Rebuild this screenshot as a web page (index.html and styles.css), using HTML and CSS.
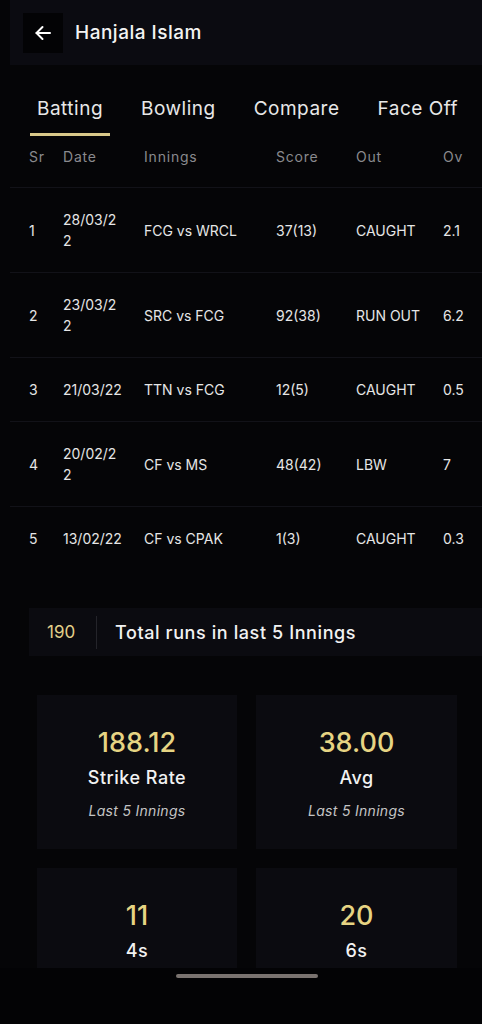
FILE: index.html
```html
<!DOCTYPE html>
<html lang="en">
<head>
<meta charset="utf-8">
<title>Hanjala Islam</title>
<link rel="stylesheet" href="styles.css">
</head>
<body>
<div class="screen">
  <header class="header">
    <button class="back" aria-label="Back">
      <svg width="18" height="18" viewBox="0 0 18 18" fill="none" stroke="#ffffff" stroke-width="2" stroke-linecap="round" stroke-linejoin="round"><path d="M16 9H2.5"/><path d="M8.5 3L2.5 9l6 6"/></svg>
    </button>
    <h1 class="title">Hanjala Islam</h1>
  </header>

  <nav class="tabs">
    <div class="tab active">Batting</div>
    <div class="tab">Bowling</div>
    <div class="tab">Compare</div>
    <div class="tab">Face Off</div>
  </nav>

  <div class="table">
    <div class="row head">
      <div class="c sr">Sr</div><div class="c date">Date</div><div class="c inn">Innings</div><div class="c score">Score</div><div class="c out">Out</div><div class="c ov">Ov</div>
    </div>
    <div class="row">
      <div class="c sr">1</div><div class="c date">28/03/2<br>2</div><div class="c inn">FCG vs WRCL</div><div class="c score">37(13)</div><div class="c out">CAUGHT</div><div class="c ov">2.1</div>
    </div>
    <div class="row">
      <div class="c sr">2</div><div class="c date">23/03/2<br>2</div><div class="c inn">SRC vs FCG</div><div class="c score">92(38)</div><div class="c out">RUN OUT</div><div class="c ov">6.2</div>
    </div>
    <div class="row">
      <div class="c sr">3</div><div class="c date">21/03/22</div><div class="c inn">TTN vs FCG</div><div class="c score">12(5)</div><div class="c out">CAUGHT</div><div class="c ov">0.5</div>
    </div>
    <div class="row">
      <div class="c sr">4</div><div class="c date">20/02/2<br>2</div><div class="c inn">CF vs MS</div><div class="c score">48(42)</div><div class="c out">LBW</div><div class="c ov">7</div>
    </div>
    <div class="row last">
      <div class="c sr">5</div><div class="c date">13/02/22</div><div class="c inn">CF vs CPAK</div><div class="c score">1(3)</div><div class="c out">CAUGHT</div><div class="c ov">0.3</div>
    </div>
  </div>

  <div class="total">
    <span class="total-num">190</span>
    <span class="total-div"></span>
    <span class="total-label">Total runs in last 5 Innings</span>
  </div>

  <div class="cards">
    <div class="card">
      <div class="val">188.12</div>
      <div class="lbl">Strike Rate</div>
      <div class="sub">Last 5 Innings</div>
    </div>
    <div class="card">
      <div class="val">38.00</div>
      <div class="lbl">Avg</div>
      <div class="sub">Last 5 Innings</div>
    </div>
    <div class="card">
      <div class="val">11</div>
      <div class="lbl">4s</div>
      <div class="sub">Last 5 Innings</div>
    </div>
    <div class="card">
      <div class="val">20</div>
      <div class="lbl">6s</div>
      <div class="sub">Last 5 Innings</div>
    </div>
  </div>

  <div class="navbar"><span class="home-ind"></span></div>
</div>
</body>
</html>
```

FILE: styles.css
```css
* { box-sizing: border-box; }
html, body { margin: 0; padding: 0; }
body {
  background: #050507;
  color: #ececec;
  font-family: Inter, "Noto Sans", "Liberation Sans", sans-serif;
}
.screen {
  position: relative;
  width: 482px;
  height: 1024px;
  overflow: hidden;
  background: #050507;
}
.header {
  margin-left: 10px;
  height: 65px;
  background: #0b0b11;
  display: flex;
  align-items: center;
  padding-left: 13px;
  gap: 12px;
}
.back {
  width: 40px;
  height: 40px;
  border: 0;
  padding: 0;
  background: #030305;
  display: flex;
  align-items: center;
  justify-content: center;
}
.title {
  margin: 0;
  font-size: 19px;
  font-weight: 500;
  color: #f3f3f3;
  letter-spacing: 0.5px;
}
.tabs {
  display: flex;
  padding: 31px 0 0 30px;
  gap: 24px;
  white-space: nowrap;
}
.tab {
  font-size: 19px;
  line-height: 26px;
  letter-spacing: 0.5px;
  padding: 0 7px 11px;
  color: #e8e8e8;
  border-bottom: 3px solid transparent;
}
.tab.active { border-bottom-color: #d9c98a; }

.table {
  margin-left: 10px;
  width: 620px;
}
.row {
  display: flex;
  align-items: center;
  padding: 21px 0 21px 19px;
  border-bottom: 1px solid #121218;
  font-size: 14px;
  line-height: 21px;
  color: #e6e6e6;
}
.row.last { border-bottom: 0; }
.row.head {
  padding: 10px 0 20px 19px;
  color: #8a8a8e;
  font-size: 14px;
  letter-spacing: 0.8px;
}
.c { flex: none; }
.sr { width: 34px; }
.date { width: 81px; padding-right: 12px; }
.inn { width: 132px; }
.score { width: 80px; }
.out { width: 87px; }
.ov { width: 60px; }

.total {
  margin: 38px 0 0 29px;
  height: 48px;
  background: #0b0b10;
  display: flex;
  align-items: center;
  padding-left: 18px;
}
.total-num {
  color: #e2d08a;
  font-size: 17px;
  width: 49px;
}
.total-div {
  width: 1px;
  height: 33px;
  background: #24242a;
  margin-right: 18px;
}
.total-label {
  font-size: 18px;
  font-weight: 500;
  letter-spacing: 0.6px;
  color: #f2f2f2;
}

.cards {
  display: grid;
  grid-template-columns: 200px 201px;
  gap: 19px;
  margin: 39px 0 0 37px;
}
.card {
  background: #0b0b10;
  height: 154px;
  padding-top: 30px;
  text-align: center;
}
.val {
  font-size: 27px;
  line-height: 36px;
  font-weight: 500;
  color: #e6d483;
}
.lbl {
  margin-top: 5px;
  font-size: 18px;
  line-height: 24px;
  font-weight: 500;
  letter-spacing: 0.5px;
  color: #f2f2f2;
}
.sub {
  margin-top: 11px;
  font-size: 14px;
  line-height: 20px;
  letter-spacing: 0.3px;
  font-style: italic;
  color: #c4c4c4;
}
.navbar {
  position: absolute;
  left: 0;
  right: 0;
  top: 968px;
  bottom: 0;
  background: #030305;
}
.home-ind {
  position: absolute;
  left: 176px;
  top: 6px;
  width: 142px;
  height: 4px;
  border-radius: 2px;
  background: #7a7370;
}
```
